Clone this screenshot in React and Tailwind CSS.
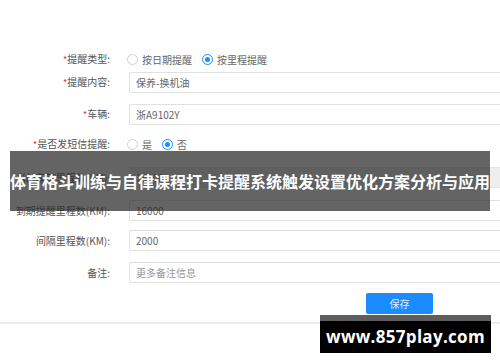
import React from "react";

function Label({ req, children }) {
  return (
    <div className="w-[110px] shrink-0 text-right text-[10px] text-[#555] leading-[20px]">
      {req && <span className="text-[#f5222d] text-[9px]">*</span>}
      {children}
    </div>
  );
}

function Radio({ checked, children }) {
  return (
    <div className="flex items-center gap-[4px]">
      <span
        className={
          "w-[11px] h-[11px] rounded-full border flex items-center justify-center bg-white " +
          (checked ? "border-[#1890ff]" : "border-[#cfcfcf]")
        }
      >
        {checked && <span className="w-[5px] h-[5px] rounded-full bg-[#1890ff]" />}
      </span>
      <span className="text-[10px] text-[#666]">{children}</span>
    </div>
  );
}

function Input({ value, disabled, placeholder }) {
  return (
    <div
      className={
        "flex-1 h-[21px] border rounded-[2px] px-[6px] flex items-center text-[10px] " +
        (disabled ? "bg-[#eeeeee] border-[#e4e4e4] text-[#777]" : "bg-white border-[#e0e0e0] text-[#666]") +
        (placeholder ? " text-[#999]" : "")
      }
    >
      {value}
    </div>
  );
}

function Row({ label, req, mt, children }) {
  return (
    <div className={"flex items-center gap-[19px] " + mt}>
      <Label req={req}>{label}</Label>
      {children}
    </div>
  );
}

export default function App() {
  return (
    <div
      className="relative w-[500px] h-[362px] overflow-hidden bg-white"
      style={{ fontFamily: '"Noto Sans CJK SC", "Noto Sans", sans-serif' }}
    >
      <div className="w-[530px] pt-[49px]">
        <Row label="提醒类型:" req mt="">
          <div className="flex items-center gap-[10px] h-[20px] -ml-[2px]">
            <Radio>按日期提醒</Radio>
            <Radio checked>按里程提醒</Radio>
          </div>
        </Row>
        <Row label="提醒内容:" req mt="mt-[2px]">
          <Input value="保养-换机油" />
        </Row>
        <Row label="车辆:" req mt="mt-[11px]">
          <Input value="浙A9102Y" />
        </Row>
        <Row label="是否发短信提醒:" req mt="mt-[9px]">
          <div className="flex items-center gap-[10px] h-[20px] -ml-[2px]">
            <Radio>是</Radio>
            <Radio checked>否</Radio>
          </div>
        </Row>
        <Row label="当前车辆里程数(KM):" mt="mt-[12px]">
          <Input value="15000" disabled />
        </Row>
        <Row label="到期提醒里程数(KM):" mt="mt-[12px]">
          <Input value="16000" />
        </Row>
        <Row label="间隔里程数(KM):" mt="mt-[9px]">
          <Input value="2000" />
        </Row>
        <Row label="备注:" mt="mt-[11px]">
          <Input value="更多备注信息" placeholder />
        </Row>
        <div className="mt-[10px] pl-[366px]">
          <div className="w-[67px] h-[21px] rounded-[2px] bg-[#1a8cff] flex items-center justify-center text-[10px] text-[#dff0ff]">
            保存
          </div>
        </div>
        <div className="mt-[8px] h-[2px] bg-[#ececf0]" />
      </div>

      <div className="absolute left-[10px] top-[151px] w-[480px] h-[60px] bg-[rgba(40,40,40,0.72)] flex items-center justify-center">
        <span className="text-white font-bold text-[16px] whitespace-nowrap">
          体育格斗训练与自律课程打卡提醒系统触发设置优化方案分析与应用
        </span>
      </div>

      <div className="absolute left-[320px] top-[315px] w-[171px] h-[38px] bg-black flex flex-col">
        <div className="h-[6px] bg-[#5e5e5e]" />
        <div className="flex-1 flex items-center justify-center">
          <span
            className="text-white font-bold text-[17px] tracking-[0.3px]"
            style={{ fontFamily: '"Open Sans", "DejaVu Sans", sans-serif' }}
          >
            www.857play.com
          </span>
        </div>
      </div>
    </div>
  );
}
